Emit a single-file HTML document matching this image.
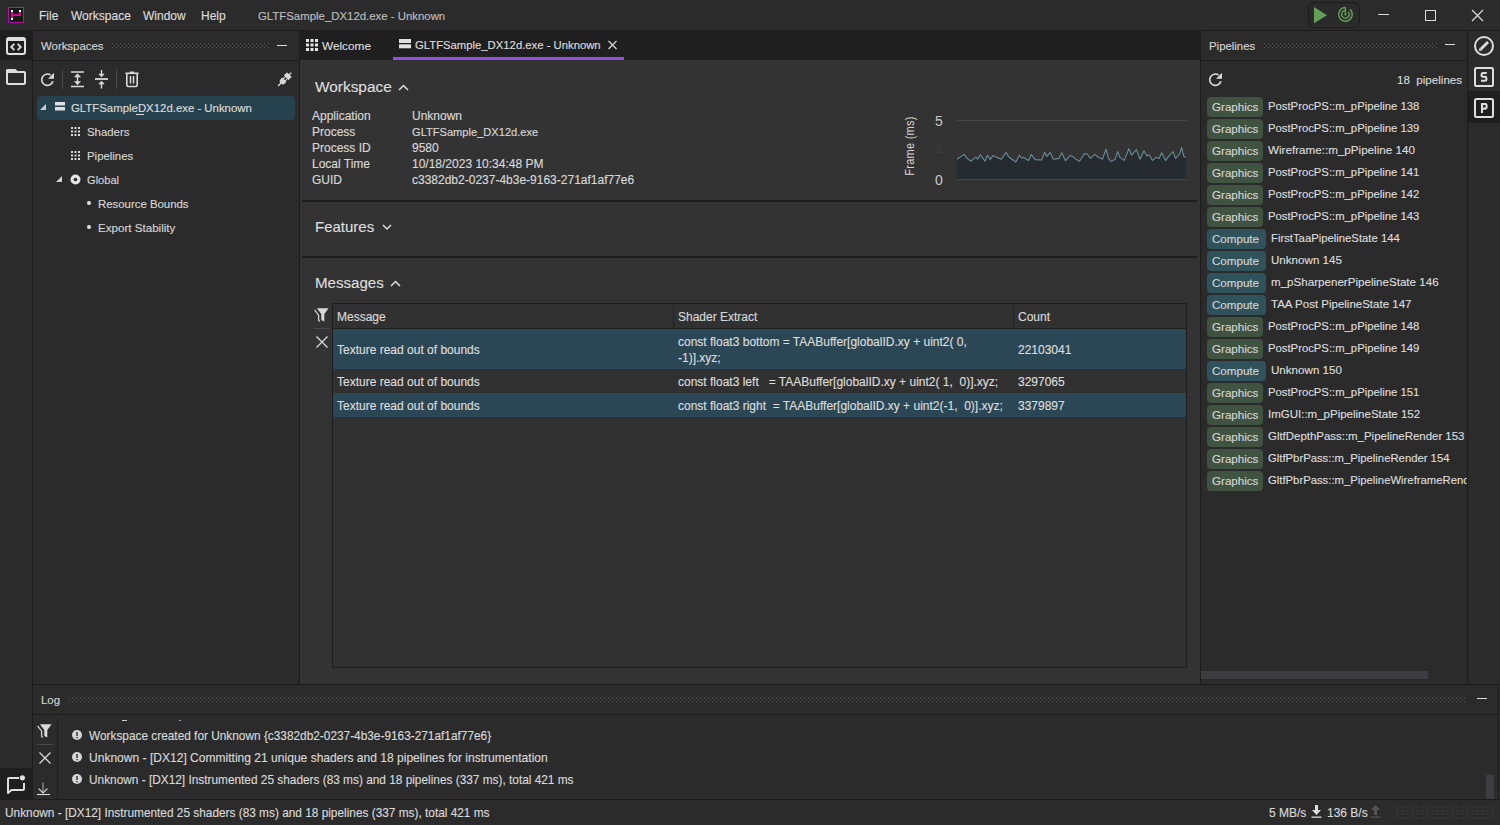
<!DOCTYPE html>
<html><head><meta charset="utf-8">
<style>
*{margin:0;padding:0;box-sizing:border-box}
html,body{width:1500px;height:825px;overflow:hidden;background:#2b2b2b}
body{position:relative;font-family:"Liberation Sans",sans-serif;color:#dcdcdc;font-size:12px}
.a{position:absolute}
.t{position:absolute;white-space:pre;line-height:20px;-webkit-text-stroke:0.15px currentColor}
.dots{position:absolute;height:5px;background-image:radial-gradient(circle at 0.5px 0.5px,#555 0.7px,transparent 0.8px);}
svg{position:absolute;overflow:visible}
</style></head><body>
<svg width="0" height="0" style="position:absolute"><defs><pattern id="dp" width="4" height="4" patternUnits="userSpaceOnUse"><rect x="0" y="0" width="1" height="1" fill="#565656"/><rect x="2" y="2" width="1" height="1" fill="#565656"/></pattern></defs></svg>

<!-- ===== TITLE BAR ===== -->
<div class="a" style="left:0;top:0;width:1500px;height:30px;background:#2b2b2b"></div>
<div class="a" style="left:0;top:30px;width:1500px;height:1px;background:#1c1c1c"></div>


<!-- logo -->
<svg style="left:8px;top:7px" width="16" height="16" viewBox="0 0 16 16" shape-rendering="crispEdges">
<defs><linearGradient id="lg" x1="1" y1="0" x2="0" y2="1"><stop offset="0" stop-color="#e0107a"/><stop offset="1" stop-color="#9a10b8"/></linearGradient></defs>
<rect x="0" y="0" width="16" height="16" fill="url(#lg)"/>
<rect x="1" y="1" width="14" height="14" fill="#161a16"/>
<rect x="3" y="5" width="2" height="6" fill="#c8108c"/>
<rect x="5" y="7" width="8" height="2" fill="#c8108c"/>
<rect x="11" y="5" width="2" height="2" fill="#c8108c"/>
<rect x="3" y="3" width="2" height="2" fill="#fff"/>
<rect x="11" y="3" width="2" height="2" fill="#fff"/>
<rect x="3" y="11" width="2" height="2" fill="#fff"/>
</svg>
<div class="t" style="left:39px;top:6px;font-size:12px;color:#dcdcdc">File</div>
<div class="t" style="left:71px;top:6px;font-size:12px;color:#dcdcdc">Workspace</div>
<div class="t" style="left:143px;top:6px;font-size:12px;color:#dcdcdc">Window</div>
<div class="t" style="left:201px;top:6px;font-size:12px;color:#dcdcdc">Help</div>
<div class="t" style="left:258px;top:6px;font-size:11.4px;color:#bdbdbd">GLTFSample_DX12d.exe - Unknown</div>
<!-- run controls -->
<div class="a" style="left:1308px;top:2px;width:52px;height:26px;border-radius:6px;background:#2a2a2a;border:1px solid #1d1d1d"></div>
<svg style="left:1313px;top:6px" width="15" height="18" viewBox="0 0 15 18"><path d="M1 1 L14 9.2 L1 17.2 Z" fill="#64a055"/></svg>
<svg style="left:1336px;top:5px" width="19" height="19" viewBox="0 0 19 19" fill="none" stroke="#64a055" stroke-width="1.5">
<path d="M13.8 4.2 A6.8 6.8 0 1 1 9.4 2.6"/><path d="M12.1 6.7 A3.8 3.8 0 1 1 9.4 5.6"/><path d="M9.4 2.4 V9.6"/><circle cx="9.4" cy="9.6" r="1.1" fill="#64a055" stroke="none"/></svg>
<div class="a" style="left:1378px;top:14px;width:11px;height:1px;background:#dcdcdc"></div>
<div class="a" style="left:1425px;top:10px;width:11px;height:11px;border:1px solid #dcdcdc"></div>
<svg style="left:1472px;top:10px" width="11" height="11" viewBox="0 0 11 11" stroke="#dcdcdc" stroke-width="1.2"><path d="M0 0 L11 11 M11 0 L0 11"/></svg>

<!-- ===== LEFT ACTIVITY BAR ===== -->
<div class="a" style="left:0;top:31px;width:32px;height:769px;background:#2b2b2b"></div>
<div class="a" style="left:0;top:31px;width:32px;height:29px;background:#1f1f1f"></div>
<div class="a" style="left:0;top:768px;width:32px;height:32px;background:#1f1f1f"></div>
<div class="a" style="left:32px;top:31px;width:1px;height:769px;background:#1c1c1c"></div>


<!-- activity icons -->
<svg style="left:6px;top:37px" width="20" height="18" viewBox="0 0 20 18" fill="none">
<rect x="1" y="1" width="18" height="16" rx="2" stroke="#dedede" stroke-width="2"/>
<rect x="1" y="1" width="18" height="3" fill="#dedede"/>
<path d="M8.3 6.8 L5.2 10 L8.3 13.2 M11.7 6.8 L14.8 10 L11.7 13.2" stroke="#dedede" stroke-width="1.8"/>
</svg>
<svg style="left:6px;top:69px" width="20" height="16" viewBox="0 0 20 16" fill="none">
<path d="M1 3 V1.5 Q1 1 1.5 1 H9 L11 3 H18 Q19 3 19 4 V14 Q19 15 18 15 H2 Q1 15 1 14 Z" stroke="#dedede" stroke-width="2" stroke-linejoin="round"/>
<path d="M1 3 H11" stroke="#dedede" stroke-width="2"/>
</svg>
<svg style="left:7px;top:775px" width="19" height="20" viewBox="0 0 19 20" fill="none">
<path d="M12 3 H2 Q1 3 1 4 V18 L4.5 15 H16 Q17 15 17 14 V8" stroke="#dedede" stroke-width="2" stroke-linejoin="round"/>
<circle cx="15.4" cy="2.8" r="2.6" fill="#dedede"/>
</svg>

<!-- ===== LEFT PANEL (Workspaces) ===== -->
<div class="a" style="left:33px;top:31px;width:266px;height:653px;background:#2b2b2b"></div>
<div class="a" style="left:33px;top:60px;width:266px;height:1px;background:#1c1c1c"></div>
<div class="a" style="left:299px;top:60px;width:1px;height:624px;background:#1c1c1c"></div>


<!-- workspaces header -->
<div class="t" style="left:41px;top:36px;font-size:11.4px;color:#d4d4d4">Workspaces</div>
<svg class="dt" style="left:112px;top:43px" width="158" height="5" shape-rendering="crispEdges"><rect width="158" height="5" fill="url(#dp)"/></svg>
<div class="a" style="left:277px;top:45px;width:10px;height:1px;background:#dcdcdc"></div>
<!-- toolbar -->
<svg style="left:38px;top:70px" width="20" height="20" viewBox="0 0 20 20" fill="none">
<path d="M14.9 11.3 A5.7 5.7 0 1 1 12.6 5" stroke="#dadada" stroke-width="1.7"/>
<path d="M16 2.8 L16 8.8 L10 8.8 Z" fill="#dadada"/>
</svg>
<div class="a" style="left:62px;top:69px;width:1px;height:20px;background:#4a4a4a"></div>
<svg style="left:71px;top:71px" width="13" height="17" viewBox="0 0 13 17" fill="none" stroke="#dadada">
<path d="M0 1 H13 M0 15.5 H13" stroke-width="1.6"/>
<path d="M6.5 3 V13.5" stroke-width="1.4"/>
<path d="M3.5 6 L6.5 2.8 L9.5 6 Z M3.5 10.5 L6.5 13.7 L9.5 10.5 Z" fill="#dadada" stroke-width="0.6"/>
</svg>
<svg style="left:95px;top:70px" width="13" height="19" viewBox="0 0 13 19" fill="none" stroke="#dadada">
<path d="M0 9 H13" stroke-width="1.8"/>
<path d="M6.5 0 V6 M6.5 12 V18.5" stroke-width="1.4"/>
<path d="M3.8 4 L6.5 7 L9.2 4 Z M3.8 14 L6.5 11 L9.2 14 Z" fill="#dadada" stroke-width="0.6"/>
</svg>
<div class="a" style="left:116px;top:69px;width:1px;height:20px;background:#4a4a4a"></div>
<svg style="left:125px;top:71px" width="14" height="17" viewBox="0 0 14 17" fill="none" stroke="#dadada">
<path d="M0.5 2.3 H13.5" stroke-width="1.6"/>
<path d="M5 1.3 H9" stroke-width="1.6"/>
<path d="M1.8 2.5 V14 Q1.8 15.5 3.3 15.5 H10.7 Q12.2 15.5 12.2 14 V2.5" stroke-width="1.6"/>
<path d="M5.5 5 V12.5 M8.5 5 V12.5" stroke-width="1.5"/>
</svg>
<svg style="left:272px;top:66px" width="24" height="26" viewBox="0 0 24 26">
<g transform="translate(12.6 13.4) rotate(45)" fill="#d8d8d8">
<rect x="-0.7" y="-9.4" width="1.4" height="3"/>
<rect x="-3.3" y="-6.8" width="6.6" height="4.6" rx="0.6"/>
<rect x="-2.1" y="-1.8" width="1.3" height="2.4"/><rect x="0.8" y="-1.8" width="1.3" height="2.4"/>
<path d="M-3 0.4 H3 V3 Q3 5.4 0.8 5.4 H-0.8 Q-3 5.4 -3 3 Z"/>
<rect x="-0.7" y="5" width="1.4" height="4.2"/>
</g></svg>
<!-- tree -->
<div class="a" style="left:37px;top:96px;width:258px;height:24px;border-radius:4px;background:#26424e"></div>
<svg style="left:40px;top:104px" width="6" height="6" viewBox="0 0 6 6"><path d="M6 0 V6 H0 Z" fill="#cfcfcf"/></svg>
<svg style="left:55px;top:102px" width="10" height="9" viewBox="0 0 10 9"><rect x="0" y="0" width="10" height="3.5" fill="#e0e0e0"/><rect x="0" y="5" width="10" height="3.5" fill="#e0e0e0"/></svg>
<div class="t" style="left:71px;top:98px;font-size:11.4px;color:#dcdcdc">GLTFSampleDX12d.exe - Unknown</div>
<div class="a" style="left:136px;top:114px;width:8px;height:1px;background:#dcdcdc"></div>
<svg style="left:71px;top:127px" width="9" height="9" viewBox="0 0 9 9" fill="#d8d8d8"><rect x="0" y="0" width="2" height="2"/><rect x="3.5" y="0" width="2" height="2"/><rect x="7" y="0" width="2" height="2"/><rect x="0" y="3.5" width="2" height="2"/><rect x="3.5" y="3.5" width="2" height="2"/><rect x="7" y="3.5" width="2" height="2"/><rect x="0" y="7" width="2" height="2"/><rect x="3.5" y="7" width="2" height="2"/><rect x="7" y="7" width="2" height="2"/></svg>
<div class="t" style="left:87px;top:122px;font-size:11.4px;color:#d6d6d6">Shaders</div>
<svg style="left:71px;top:151px" width="9" height="9" viewBox="0 0 9 9" fill="#d8d8d8"><rect x="0" y="0" width="2" height="2"/><rect x="3.5" y="0" width="2" height="2"/><rect x="7" y="0" width="2" height="2"/><rect x="0" y="3.5" width="2" height="2"/><rect x="3.5" y="3.5" width="2" height="2"/><rect x="7" y="3.5" width="2" height="2"/><rect x="0" y="7" width="2" height="2"/><rect x="3.5" y="7" width="2" height="2"/><rect x="7" y="7" width="2" height="2"/></svg>
<div class="t" style="left:87px;top:146px;font-size:11.4px;color:#d6d6d6">Pipelines</div>
<svg style="left:56px;top:176px" width="6" height="6" viewBox="0 0 6 6"><path d="M6 0 V6 H0 Z" fill="#cfcfcf"/></svg>
<svg style="left:70px;top:174px" width="11" height="11" viewBox="0 0 11 11"><circle cx="5.5" cy="5.5" r="5" fill="#e4e4e4"/><circle cx="5.5" cy="5.5" r="1.8" fill="#2b2b2b"/></svg>
<div class="t" style="left:87px;top:170px;font-size:11.1px;color:#d6d6d6">Global</div>
<div class="a" style="left:87px;top:201px;width:4px;height:4px;border-radius:2px;background:#e0e0e0"></div>
<div class="t" style="left:98px;top:194px;font-size:11.4px;color:#d6d6d6">Resource Bounds</div>
<div class="a" style="left:87px;top:225px;width:4px;height:4px;border-radius:2px;background:#e0e0e0"></div>
<div class="t" style="left:98px;top:218px;font-size:11.6px;color:#d6d6d6">Export Stability</div>

<!-- ===== CENTER ===== -->
<div class="a" style="left:299px;top:31px;width:901px;height:29px;background:#1f1f1f"></div>
<div class="a" style="left:300px;top:60px;width:900px;height:624px;background:#333333"></div>
<div class="a" style="left:1200px;top:31px;width:1px;height:653px;background:#1c1c1c"></div>


<!-- tabs -->
<svg style="left:306px;top:39px" width="12" height="12" viewBox="0 0 12 12" fill="#e6e6e6"><rect x="0" y="0" width="3" height="3"/><rect x="4.5" y="0" width="3" height="3"/><rect x="9" y="0" width="3" height="3"/><rect x="0" y="4.5" width="3" height="3"/><rect x="4.5" y="4.5" width="3" height="3"/><rect x="9" y="4.5" width="3" height="3"/><rect x="0" y="9" width="3" height="3"/><rect x="4.5" y="9" width="3" height="3"/><rect x="9" y="9" width="3" height="3"/></svg>
<div class="t" style="left:322px;top:36px;font-size:11.8px;color:#dcdcdc">Welcome</div>
<svg style="left:399px;top:39px" width="12" height="10" viewBox="0 0 12 10"><rect x="0" y="0" width="12" height="4" fill="#e0e0e0"/><rect x="0" y="5.3" width="12" height="4" fill="#e0e0e0"/></svg>
<div class="t" style="left:415px;top:35px;font-size:11.3px;color:#dcdcdc">GLTFSample_DX12d.exe - Unknown</div>
<svg style="left:608px;top:41px" width="9" height="8" viewBox="0 0 9 8" stroke="#dcdcdc" stroke-width="1.2"><path d="M0.5 0 L8.5 8 M8.5 0 L0.5 8"/></svg>
<div class="a" style="left:393px;top:57px;width:231px;height:3px;background:#9150e2"></div>

<!-- workspace section -->
<div class="t" style="left:315px;top:77px;font-size:15.4px;color:#dedede">Workspace</div>
<svg style="left:398px;top:84px" width="11" height="7" viewBox="0 0 11 7" fill="none" stroke="#dedede" stroke-width="1.5"><path d="M1 6 L5.5 1.5 L10 6"/></svg>
<div class="t" style="left:312px;top:106px;font-size:12px;color:#d8d8d8">Application</div>
<div class="t" style="left:312px;top:122px;font-size:12px;color:#d8d8d8">Process</div>
<div class="t" style="left:312px;top:138px;font-size:12px;color:#d8d8d8">Process ID</div>
<div class="t" style="left:312px;top:154px;font-size:12px;color:#d8d8d8">Local Time</div>
<div class="t" style="left:312px;top:170px;font-size:12px;color:#d8d8d8">GUID</div>
<div class="t" style="left:412px;top:106px;font-size:12px;color:#d8d8d8">Unknown</div>
<div class="t" style="left:412px;top:122px;font-size:11.1px;color:#d8d8d8">GLTFSample_DX12d.exe</div>
<div class="t" style="left:412px;top:138px;font-size:12px;color:#d8d8d8">9580</div>
<div class="t" style="left:412px;top:154px;font-size:12px;color:#d8d8d8">10/18/2023 10:34:48 PM</div>
<div class="t" style="left:412px;top:170px;font-size:12px;color:#d8d8d8">c3382db2-0237-4b3e-9163-271af1af77e6</div>

<!-- chart -->
<div class="a" id="frameLbl" style="left:870px;top:136px;width:80px;height:20px;line-height:20px;text-align:center;white-space:pre;font-size:12.2px;color:#d4d4d4;transform:rotate(-90deg) scaleX(0.9);letter-spacing:0.3px">Frame (ms)</div>
<div class="t" style="left:935px;top:111px;font-size:14px;color:#c8c8c8;-webkit-text-stroke:0">5</div>
<div class="t" style="left:935px;top:138px;font-size:14px;color:#3c3c3c">2</div>
<div class="t" style="left:935px;top:170px;font-size:14px;color:#c8c8c8;-webkit-text-stroke:0">0</div>
<div class="a" style="left:957px;top:120px;width:230px;height:1px;background:#4a4a4a"></div>
<svg id="chart" style="left:957px;top:140px" width="230" height="40" viewBox="0 0 230 40"><path d="M0,39 L0.0,19.2 L7.2,14.4 L10.0,18.4 L14.0,21.2 L18.8,17.2 L20.8,19.2 L23.2,14.8 L28.0,21.2 L30.4,15.2 L33.2,19.6 L36.0,15.6 L39.6,17.2 L44.4,19.2 L49.2,12.4 L51.6,16.8 L58.8,22.0 L62.4,15.2 L64.4,18.0 L66.4,17.6 L71.6,20.4 L74.4,14.4 L78.0,19.6 L84.8,20.0 L87.6,12.4 L90.0,16.4 L93.2,12.4 L96.4,19.2 L102.0,18.4 L104.8,12.8 L108.4,20.8 L113.2,15.6 L116.2,16.8 L119.4,19.6 L122.6,21.2 L127.4,13.6 L130.2,14.0 L133.4,18.4 L137.8,14.4 L141.4,17.2 L145.4,19.2 L149.0,9.2 L151.4,18.4 L154.2,21.6 L158.2,19.2 L160.6,11.6 L163.0,17.6 L167.4,20.4 L171.8,8.8 L174.6,15.2 L177.0,12.4 L179.4,9.6 L181.4,15.2 L183.0,19.2 L187.0,10.8 L189.8,16.0 L192.2,14.8 L195.4,20.4 L199.4,17.2 L202.2,18.4 L204.6,12.8 L208.6,20.4 L212.2,15.6 L216.2,11.6 L218.6,18.4 L222.6,14.0 L224.6,7.6 L226.6,16.0 L229.0,17.6 L229,39 Z" fill="#252b2f"/><polyline points="0.0,19.2 7.2,14.4 10.0,18.4 14.0,21.2 18.8,17.2 20.8,19.2 23.2,14.8 28.0,21.2 30.4,15.2 33.2,19.6 36.0,15.6 39.6,17.2 44.4,19.2 49.2,12.4 51.6,16.8 58.8,22.0 62.4,15.2 64.4,18.0 66.4,17.6 71.6,20.4 74.4,14.4 78.0,19.6 84.8,20.0 87.6,12.4 90.0,16.4 93.2,12.4 96.4,19.2 102.0,18.4 104.8,12.8 108.4,20.8 113.2,15.6 116.2,16.8 119.4,19.6 122.6,21.2 127.4,13.6 130.2,14.0 133.4,18.4 137.8,14.4 141.4,17.2 145.4,19.2 149.0,9.2 151.4,18.4 154.2,21.6 158.2,19.2 160.6,11.6 163.0,17.6 167.4,20.4 171.8,8.8 174.6,15.2 177.0,12.4 179.4,9.6 181.4,15.2 183.0,19.2 187.0,10.8 189.8,16.0 192.2,14.8 195.4,20.4 199.4,17.2 202.2,18.4 204.6,12.8 208.6,20.4 212.2,15.6 216.2,11.6 218.6,18.4 222.6,14.0 224.6,7.6 226.6,16.0 229.0,17.6" fill="none" stroke="#6a8c99" stroke-width="1.1" stroke-linejoin="round"/><rect x="0" y="39" width="230" height="1" fill="#454545"/></svg>

<div class="a" style="left:302px;top:200px;width:895px;height:2px;background:#1f1f1f"></div>
<div class="t" style="left:315px;top:217px;font-size:15px;color:#dedede">Features</div>
<svg style="left:382px;top:224px" width="10" height="7" viewBox="0 0 10 7" fill="none" stroke="#dedede" stroke-width="1.5"><path d="M1 1 L5 5 L9 1"/></svg>
<div class="a" style="left:302px;top:256px;width:895px;height:2px;background:#1f1f1f"></div>
<div class="t" style="left:315px;top:273px;font-size:15.1px;color:#dedede">Messages</div>
<svg style="left:390px;top:280px" width="11" height="7" viewBox="0 0 11 7" fill="none" stroke="#dedede" stroke-width="1.5"><path d="M1 6 L5.5 1.5 L10 6"/></svg>

<!-- messages table -->
<div class="a" style="left:332px;top:303px;width:855px;height:365px;border:1px solid #1e1e1e;background:#313131"></div>
<div class="a" style="left:333px;top:328px;width:853px;height:1px;background:#1e1e1e"></div>
<div class="a" style="left:673px;top:306px;width:1px;height:22px;background:#232323"></div>
<div class="a" style="left:1013px;top:306px;width:1px;height:22px;background:#232323"></div>
<div class="t" style="left:337px;top:307px;font-size:12px;color:#d8d8d8">Message</div>
<div class="t" style="left:678px;top:307px;font-size:12px;color:#d8d8d8">Shader Extract</div>
<div class="t" style="left:1018px;top:307px;font-size:12px;color:#d8d8d8">Count</div>
<div class="a" style="left:333px;top:329px;width:853px;height:40px;background:#2b4755"></div>
<div class="a" style="left:333px;top:393px;width:853px;height:24px;background:#2b4755"></div>
<div class="t" style="left:337px;top:340px;font-size:12px;color:#dcdcdc">Texture read out of bounds</div>
<div class="t" style="left:678px;top:332px;font-size:12px;color:#dcdcdc">const float3 bottom = TAABuffer[globalID.xy + uint2( 0,</div>
<div class="t" style="left:678px;top:348px;font-size:12px;color:#dcdcdc">-1)].xyz;</div>
<div class="t" style="left:1018px;top:340px;font-size:12px;color:#dcdcdc">22103041</div>
<div class="t" style="left:337px;top:372px;font-size:12px;color:#dcdcdc">Texture read out of bounds</div>
<div class="t" style="left:678px;top:372px;font-size:12px;color:#dcdcdc">const float3 left   = TAABuffer[globalID.xy + uint2( 1,  0)].xyz;</div>
<div class="t" style="left:1018px;top:372px;font-size:12px;color:#dcdcdc">3297065</div>
<div class="t" style="left:337px;top:396px;font-size:12px;color:#dcdcdc">Texture read out of bounds</div>
<div class="t" style="left:678px;top:396px;font-size:12px;color:#dcdcdc">const float3 right  = TAABuffer[globalID.xy + uint2(-1,  0)].xyz;</div>
<div class="t" style="left:1018px;top:396px;font-size:12px;color:#dcdcdc">3379897</div>
<!-- filter / clear icons -->
<svg style="left:311px;top:304px" width="22" height="22" viewBox="0 0 22 22">
<path d="M5.9 4.3 H17.6 L13.3 10.1 V17.6 L10.3 16 V10.1 Z" fill="#dadada"/>
<path d="M3.6 5.9 L7.6 11.2 V16.4 L8.9 17.4" fill="none" stroke="#d0d0d0" stroke-width="1.3"/>
</svg>
<div class="a" style="left:314px;top:328px;width:16px;height:1px;background:#4a4a4a"></div>
<svg style="left:316px;top:336px" width="12" height="12" viewBox="0 0 12 12" stroke="#dadada" stroke-width="1.3"><path d="M0.5 0.5 L11.5 11.5 M11.5 0.5 L0.5 11.5"/></svg>

<!-- ===== RIGHT PANEL ===== -->
<div class="a" style="left:1201px;top:31px;width:266px;height:653px;background:#2b2b2b"></div>
<div class="a" style="left:1201px;top:60px;width:266px;height:1px;background:#1c1c1c"></div>
<div class="a" style="left:1467px;top:31px;width:1px;height:653px;background:#1c1c1c"></div>
<div class="a" style="left:1468px;top:31px;width:32px;height:653px;background:#2b2b2b"></div>
<div class="a" style="left:1468px;top:91px;width:32px;height:32px;background:#1f1f1f"></div>


<div class="t" style="left:1209px;top:36px;font-size:11.4px;color:#d4d4d4">Pipelines</div>
<svg class="dt" style="left:1264px;top:43px" width="174" height="5" shape-rendering="crispEdges"><rect width="174" height="5" fill="url(#dp)"/></svg>
<div class="a" style="left:1445px;top:44px;width:10px;height:1px;background:#dcdcdc"></div>
<svg style="left:1206px;top:70px" width="20" height="20" viewBox="0 0 20 20" fill="none">
<path d="M14.9 11.3 A5.7 5.7 0 1 1 12.6 5" stroke="#dadada" stroke-width="1.7"/>
<path d="M16 2.8 L16 8.8 L10 8.8 Z" fill="#dadada"/>
</svg>
<div class="t" style="left:1397px;top:70px;font-size:11.6px;color:#d8d8d8">18  pipelines</div>
<div style="position:absolute;left:1201px;top:61px;width:266px;height:623px;overflow:hidden">
<div style="position:absolute;left:-1201px;top:-61px;width:1500px;height:700px">
<div class="a" style="left:1207px;top:97px;width:56px;height:20px;border-radius:4px;background:#405240"></div>
<div class="t" style="left:1212px;top:97px;font-size:11.6px;color:#d4d4d4">Graphics</div>
<div class="t" style="left:1268px;top:96px;font-size:11.3px;color:#dcdcdc">PostProcPS::m_pPipeline 138</div>
<div class="a" style="left:1207px;top:119px;width:56px;height:20px;border-radius:4px;background:#405240"></div>
<div class="t" style="left:1212px;top:119px;font-size:11.6px;color:#d4d4d4">Graphics</div>
<div class="t" style="left:1268px;top:118px;font-size:11.3px;color:#dcdcdc">PostProcPS::m_pPipeline 139</div>
<div class="a" style="left:1207px;top:141px;width:56px;height:20px;border-radius:4px;background:#405240"></div>
<div class="t" style="left:1212px;top:141px;font-size:11.6px;color:#d4d4d4">Graphics</div>
<div class="t" style="left:1268px;top:140px;font-size:11.65px;color:#dcdcdc">Wireframe::m_pPipeline 140</div>
<div class="a" style="left:1207px;top:163px;width:56px;height:20px;border-radius:4px;background:#405240"></div>
<div class="t" style="left:1212px;top:163px;font-size:11.6px;color:#d4d4d4">Graphics</div>
<div class="t" style="left:1268px;top:162px;font-size:11.3px;color:#dcdcdc">PostProcPS::m_pPipeline 141</div>
<div class="a" style="left:1207px;top:185px;width:56px;height:20px;border-radius:4px;background:#405240"></div>
<div class="t" style="left:1212px;top:185px;font-size:11.6px;color:#d4d4d4">Graphics</div>
<div class="t" style="left:1268px;top:184px;font-size:11.3px;color:#dcdcdc">PostProcPS::m_pPipeline 142</div>
<div class="a" style="left:1207px;top:207px;width:56px;height:20px;border-radius:4px;background:#405240"></div>
<div class="t" style="left:1212px;top:207px;font-size:11.6px;color:#d4d4d4">Graphics</div>
<div class="t" style="left:1268px;top:206px;font-size:11.3px;color:#dcdcdc">PostProcPS::m_pPipeline 143</div>
<div class="a" style="left:1207px;top:229px;width:59px;height:20px;border-radius:4px;background:#30525a"></div>
<div class="t" style="left:1212px;top:229px;font-size:11.6px;color:#d4d4d4">Compute</div>
<div class="t" style="left:1271px;top:228px;font-size:11.3px;color:#dcdcdc">FirstTaaPipelineState 144</div>
<div class="a" style="left:1207px;top:251px;width:59px;height:20px;border-radius:4px;background:#30525a"></div>
<div class="t" style="left:1212px;top:251px;font-size:11.6px;color:#d4d4d4">Compute</div>
<div class="t" style="left:1271px;top:250px;font-size:11.6px;color:#dcdcdc">Unknown 145</div>
<div class="a" style="left:1207px;top:273px;width:59px;height:20px;border-radius:4px;background:#30525a"></div>
<div class="t" style="left:1212px;top:273px;font-size:11.6px;color:#d4d4d4">Compute</div>
<div class="t" style="left:1271px;top:272px;font-size:11.6px;color:#dcdcdc">m_pSharpenerPipelineState 146</div>
<div class="a" style="left:1207px;top:295px;width:59px;height:20px;border-radius:4px;background:#30525a"></div>
<div class="t" style="left:1212px;top:295px;font-size:11.6px;color:#d4d4d4">Compute</div>
<div class="t" style="left:1271px;top:294px;font-size:11.5px;color:#dcdcdc">TAA Post PipelineState 147</div>
<div class="a" style="left:1207px;top:317px;width:56px;height:20px;border-radius:4px;background:#405240"></div>
<div class="t" style="left:1212px;top:317px;font-size:11.6px;color:#d4d4d4">Graphics</div>
<div class="t" style="left:1268px;top:316px;font-size:11.3px;color:#dcdcdc">PostProcPS::m_pPipeline 148</div>
<div class="a" style="left:1207px;top:339px;width:56px;height:20px;border-radius:4px;background:#405240"></div>
<div class="t" style="left:1212px;top:339px;font-size:11.6px;color:#d4d4d4">Graphics</div>
<div class="t" style="left:1268px;top:338px;font-size:11.3px;color:#dcdcdc">PostProcPS::m_pPipeline 149</div>
<div class="a" style="left:1207px;top:361px;width:59px;height:20px;border-radius:4px;background:#30525a"></div>
<div class="t" style="left:1212px;top:361px;font-size:11.6px;color:#d4d4d4">Compute</div>
<div class="t" style="left:1271px;top:360px;font-size:11.6px;color:#dcdcdc">Unknown 150</div>
<div class="a" style="left:1207px;top:383px;width:56px;height:20px;border-radius:4px;background:#405240"></div>
<div class="t" style="left:1212px;top:383px;font-size:11.6px;color:#d4d4d4">Graphics</div>
<div class="t" style="left:1268px;top:382px;font-size:11.3px;color:#dcdcdc">PostProcPS::m_pPipeline 151</div>
<div class="a" style="left:1207px;top:405px;width:56px;height:20px;border-radius:4px;background:#405240"></div>
<div class="t" style="left:1212px;top:405px;font-size:11.6px;color:#d4d4d4">Graphics</div>
<div class="t" style="left:1268px;top:404px;font-size:11.5px;color:#dcdcdc">ImGUI::m_pPipelineState 152</div>
<div class="a" style="left:1207px;top:427px;width:56px;height:20px;border-radius:4px;background:#405240"></div>
<div class="t" style="left:1212px;top:427px;font-size:11.6px;color:#d4d4d4">Graphics</div>
<div class="t" style="left:1268px;top:426px;font-size:11.45px;color:#dcdcdc">GltfDepthPass::m_PipelineRender 153</div>
<div class="a" style="left:1207px;top:449px;width:56px;height:20px;border-radius:4px;background:#405240"></div>
<div class="t" style="left:1212px;top:449px;font-size:11.6px;color:#d4d4d4">Graphics</div>
<div class="t" style="left:1268px;top:448px;font-size:11.3px;color:#dcdcdc">GltfPbrPass::m_PipelineRender 154</div>
<div class="a" style="left:1207px;top:471px;width:56px;height:20px;border-radius:4px;background:#405240"></div>
<div class="t" style="left:1212px;top:471px;font-size:11.6px;color:#d4d4d4">Graphics</div>
<div class="t" style="left:1268px;top:470px;font-size:11.3px;color:#dcdcdc">GltfPbrPass::m_PipelineWireframeRender 155</div>
</div></div>
<div class="a" style="left:1201px;top:671px;width:227px;height:8px;background:#3e3e42"></div>
<!-- right activity icons -->
<svg style="left:1474px;top:36px" width="20" height="20" viewBox="0 0 20 20" fill="none">
<circle cx="10" cy="10" r="9" stroke="#dedede" stroke-width="2"/>
<path d="M7 13 L14 6" stroke="#dedede" stroke-width="2.9"/><path d="M4.9 15.1 L5.6 11.6 L8.4 14.4 Z" fill="#dedede"/>
</svg>
<svg style="left:1474px;top:67px" width="20" height="20" viewBox="0 0 20 20" fill="none">
<rect x="1" y="1" width="18" height="18" rx="1.5" stroke="#dedede" stroke-width="2"/>
<path d="M12.8 6 H9 Q7.6 6 7.6 7.4 V8.4 Q7.6 9.8 9 9.8 H11 Q12.4 9.8 12.4 11.2 V12.4 Q12.4 13.8 11 13.8 H7" stroke="#dedede" stroke-width="2.1"/>
</svg>
<svg style="left:1474px;top:98px" width="20" height="20" viewBox="0 0 20 20" fill="none">
<rect x="1" y="1" width="18" height="18" rx="1.5" stroke="#dedede" stroke-width="2"/>
<path d="M8 15 V6 H11.2 Q12.6 6 12.6 7.4 V9.2 Q12.6 10.6 11.2 10.6 H8" stroke="#dedede" stroke-width="2.1"/>
</svg>

<!-- ===== LOG PANEL ===== -->
<div class="a" style="left:33px;top:684px;width:1467px;height:1px;background:#1c1c1c"></div>
<div class="a" style="left:33px;top:685px;width:1467px;height:29px;background:#2b2b2b"></div>
<div class="a" style="left:33px;top:714px;width:1467px;height:1px;background:#1c1c1c"></div>
<div class="a" style="left:33px;top:715px;width:1467px;height:84px;background:#2b2b2b"></div>
<div class="a" style="left:57px;top:719px;width:1px;height:80px;background:#1f1f1f"></div>
<div class="a" style="left:1498px;top:685px;width:1px;height:114px;background:#1e1e1e"></div>


<div class="t" style="left:41px;top:690px;font-size:11.4px;color:#d4d4d4">Log</div>
<svg class="dt" style="left:68px;top:697px" width="1398" height="5" shape-rendering="crispEdges"><rect width="1398" height="5" fill="url(#dp)"/></svg>
<div class="a" style="left:1477px;top:698px;width:10px;height:1px;background:#dcdcdc"></div>
<svg style="left:34px;top:720px" width="22" height="22" viewBox="0 0 22 22">
<path d="M5.9 4.3 H17.6 L13.3 10.1 V17.6 L10.3 16 V10.1 Z" fill="#dadada"/>
<path d="M3.6 5.9 L7.6 11.2 V16.4 L8.9 17.4" fill="none" stroke="#d0d0d0" stroke-width="1.3"/>
</svg>
<div class="a" style="left:37px;top:744px;width:16px;height:1px;background:#4a4a4a"></div>
<svg style="left:39px;top:752px" width="12" height="12" viewBox="0 0 12 12" stroke="#dadada" stroke-width="1.3"><path d="M0.5 0.5 L11.5 11.5 M11.5 0.5 L0.5 11.5"/></svg>
<svg style="left:37px;top:782px" width="13" height="14" viewBox="0 0 13 14" fill="none" stroke="#dadada"><path d="M6 0.5 V11" stroke-width="1.1" stroke="#a8a8a8"/><path d="M1.6 6.6 L6 11 L10.4 6.6" stroke-width="1.2"/><path d="M0 12.5 H13" stroke-width="1.1"/></svg>
<div style="position:absolute;left:58px;top:715px;width:1430px;height:84px;overflow:hidden">
<div style="position:absolute;left:-58px;top:-715px;width:1500px;height:825px">
<div class="a" style="left:122px;top:720px;width:5px;height:1px;background:#cfcfcf"></div><div class="a" style="left:179px;top:720px;width:2px;height:1px;background:#9a9a9a"></div>
<svg style="left:72px;top:730px" width="10" height="10" viewBox="0 0 10 10"><circle cx="5" cy="5" r="5" fill="#d6d6d6"/><rect x="4.3" y="2" width="1.4" height="4" fill="#2b2b2b"/><rect x="4.3" y="7" width="1.4" height="1.3" fill="#2b2b2b"/></svg>
<div class="t" style="left:89px;top:726px;font-size:11.85px;color:#d8d8d8">Workspace created for Unknown {c3382db2-0237-4b3e-9163-271af1af77e6}</div>
<svg style="left:72px;top:752px" width="10" height="10" viewBox="0 0 10 10"><circle cx="5" cy="5" r="5" fill="#d6d6d6"/><rect x="4.3" y="2" width="1.4" height="4" fill="#2b2b2b"/><rect x="4.3" y="7" width="1.4" height="1.3" fill="#2b2b2b"/></svg>
<div class="t" style="left:89px;top:748px;font-size:12.05px;color:#d8d8d8">Unknown - [DX12] Committing 21 unique shaders and 18 pipelines for instrumentation</div>
<svg style="left:72px;top:774px" width="10" height="10" viewBox="0 0 10 10"><circle cx="5" cy="5" r="5" fill="#d6d6d6"/><rect x="4.3" y="2" width="1.4" height="4" fill="#2b2b2b"/><rect x="4.3" y="7" width="1.4" height="1.3" fill="#2b2b2b"/></svg>
<div class="t" style="left:89px;top:770px;font-size:11.85px;color:#d8d8d8">Unknown - [DX12] Instrumented 25 shaders (83 ms) and 18 pipelines (337 ms), total 421 ms</div>
</div></div>
<div class="a" style="left:1486px;top:775px;width:8px;height:24px;background:#3e3e42"></div>

<!-- ===== STATUS BAR ===== -->
<div class="a" style="left:0;top:799px;width:1500px;height:1px;background:#1c1c1c"></div>
<div class="a" style="left:0;top:800px;width:1500px;height:25px;background:#2b2b2b"></div>


<div class="t" style="left:5px;top:803px;font-size:11.85px;color:#d8d8d8">Unknown - [DX12] Instrumented 25 shaders (83 ms) and 18 pipelines (337 ms), total 421 ms</div>
<div class="t" style="left:1269px;top:803px;font-size:12px;color:#d8d8d8">5 MB/s</div>
<svg style="left:1311px;top:805px" width="11" height="13" viewBox="0 0 11 13"><path d="M4 0 H7 V5 H10 L5.5 10 L1 5 H4 Z" fill="#dcdcdc"/><rect x="0.5" y="11.5" width="10" height="1.3" fill="#dcdcdc"/></svg>
<div class="t" style="left:1327px;top:803px;font-size:12px;color:#d8d8d8">136 B/s</div>
<svg style="left:1370px;top:805px" width="11" height="13" viewBox="0 0 11 13"><path d="M4 10 H7 V5 H10 L5.5 0 L1 5 H4 Z" fill="#555"/><rect x="0.5" y="11.5" width="10" height="1.3" fill="#555"/></svg>
<svg style="left:1396px;top:806px" width="100" height="14" shape-rendering="crispEdges" fill="#333333"><rect x="0" y="0" width="3" height="2"/><rect x="5" y="0" width="3" height="2"/><rect x="10" y="0" width="3" height="2"/><rect x="15" y="0" width="3" height="2"/><rect x="20" y="0" width="3" height="2"/><rect x="25" y="0" width="3" height="2"/><rect x="30" y="0" width="3" height="2"/><rect x="35" y="0" width="3" height="2"/><rect x="40" y="0" width="3" height="2"/><rect x="45" y="0" width="3" height="2"/><rect x="50" y="0" width="3" height="2"/><rect x="55" y="0" width="3" height="2"/><rect x="60" y="0" width="3" height="2"/><rect x="65" y="0" width="3" height="2"/><rect x="70" y="0" width="3" height="2"/><rect x="75" y="0" width="3" height="2"/><rect x="80" y="0" width="3" height="2"/><rect x="85" y="0" width="3" height="2"/><rect x="90" y="0" width="3" height="2"/><rect x="95" y="0" width="3" height="2"/><rect x="0" y="4" width="3" height="2"/><rect x="5" y="4" width="3" height="2"/><rect x="10" y="4" width="3" height="2"/><rect x="15" y="4" width="3" height="2"/><rect x="20" y="4" width="3" height="2"/><rect x="25" y="4" width="3" height="2"/><rect x="30" y="4" width="3" height="2"/><rect x="35" y="4" width="3" height="2"/><rect x="40" y="4" width="3" height="2"/><rect x="45" y="4" width="3" height="2"/><rect x="50" y="4" width="3" height="2"/><rect x="55" y="4" width="3" height="2"/><rect x="60" y="4" width="3" height="2"/><rect x="65" y="4" width="3" height="2"/><rect x="70" y="4" width="3" height="2"/><rect x="75" y="4" width="3" height="2"/><rect x="80" y="4" width="3" height="2"/><rect x="85" y="4" width="3" height="2"/><rect x="90" y="4" width="3" height="2"/><rect x="95" y="4" width="3" height="2"/><rect x="0" y="7" width="3" height="2"/><rect x="5" y="7" width="3" height="2"/><rect x="10" y="7" width="3" height="2"/><rect x="15" y="7" width="3" height="2"/><rect x="20" y="7" width="3" height="2"/><rect x="25" y="7" width="3" height="2"/><rect x="30" y="7" width="3" height="2"/><rect x="35" y="7" width="3" height="2"/><rect x="40" y="7" width="3" height="2"/><rect x="45" y="7" width="3" height="2"/><rect x="50" y="7" width="3" height="2"/><rect x="55" y="7" width="3" height="2"/><rect x="60" y="7" width="3" height="2"/><rect x="65" y="7" width="3" height="2"/><rect x="70" y="7" width="3" height="2"/><rect x="75" y="7" width="3" height="2"/><rect x="80" y="7" width="3" height="2"/><rect x="85" y="7" width="3" height="2"/><rect x="90" y="7" width="3" height="2"/><rect x="95" y="7" width="3" height="2"/><rect x="0" y="11" width="3" height="2"/><rect x="5" y="11" width="3" height="2"/><rect x="10" y="11" width="3" height="2"/><rect x="15" y="11" width="3" height="2"/><rect x="20" y="11" width="3" height="2"/><rect x="25" y="11" width="3" height="2"/><rect x="30" y="11" width="3" height="2"/><rect x="35" y="11" width="3" height="2"/><rect x="40" y="11" width="3" height="2"/><rect x="45" y="11" width="3" height="2"/><rect x="50" y="11" width="3" height="2"/><rect x="55" y="11" width="3" height="2"/><rect x="60" y="11" width="3" height="2"/><rect x="65" y="11" width="3" height="2"/><rect x="70" y="11" width="3" height="2"/><rect x="75" y="11" width="3" height="2"/><rect x="80" y="11" width="3" height="2"/><rect x="85" y="11" width="3" height="2"/><rect x="90" y="11" width="3" height="2"/><rect x="95" y="11" width="3" height="2"/></svg>

</body></html>
